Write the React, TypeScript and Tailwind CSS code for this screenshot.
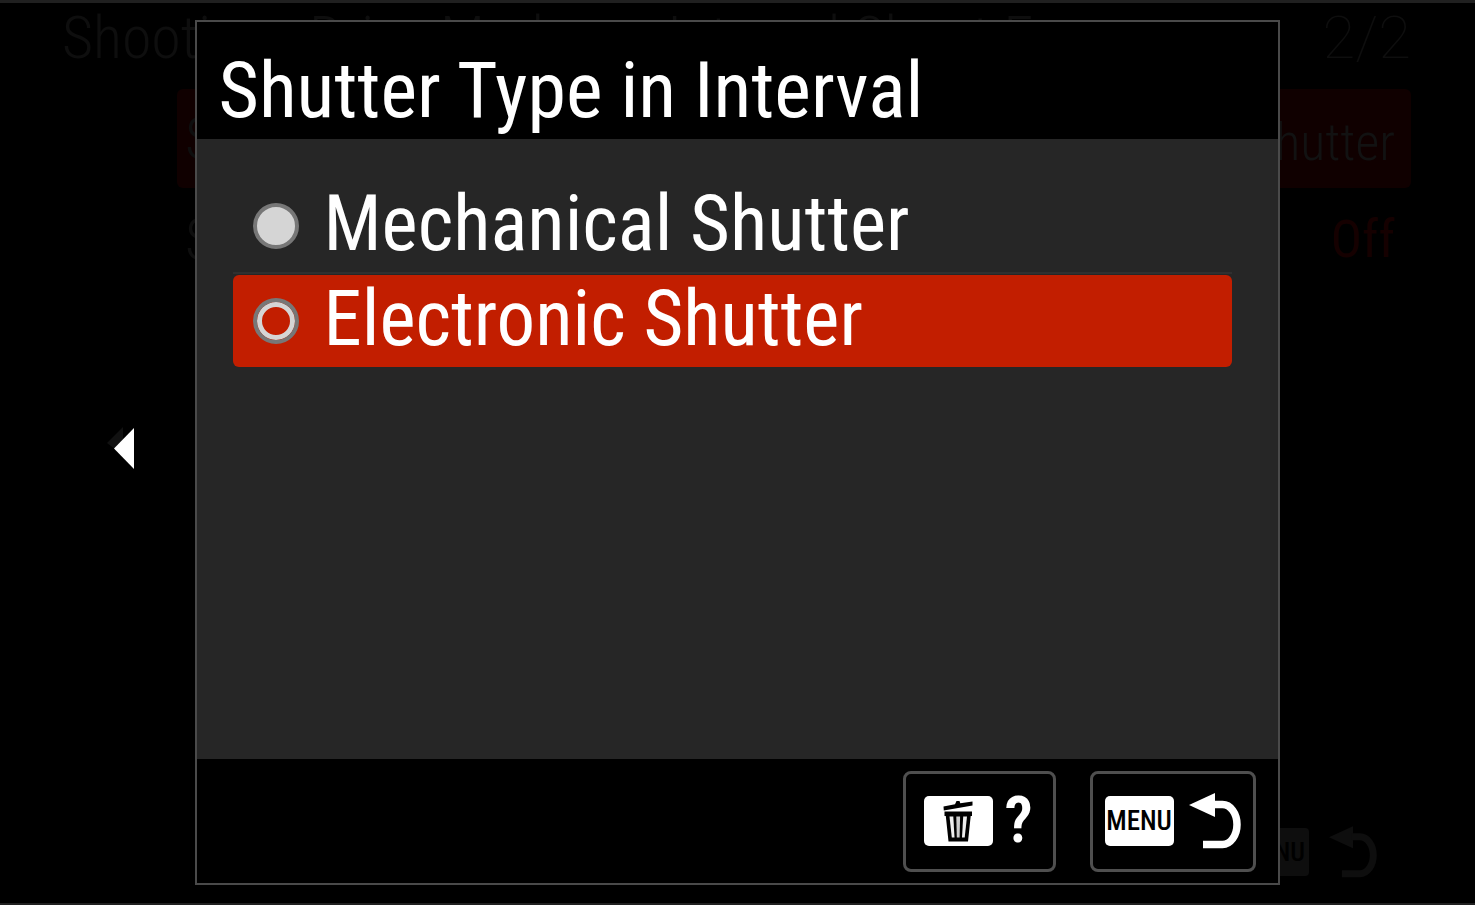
import { useState } from "react";

function ReturnIcon({ className }: { className: string }) {
  return (
    <svg viewBox="0 0 52 56" className={className} aria-hidden="true">
      <path d="M0 12 26 0v24z" fill="currentColor" />
      <path
        d="M24 11.500h9.500c8 0 14.500 9 14.500 20s-6.500 20-14.500 20H14"
        fill="none"
        stroke="currentColor"
        strokeWidth="7.500"
      />
    </svg>
  );
}

function TrashIcon() {
  return (
    <svg viewBox="0 0 30 42" className="h-[42px] w-[30px]" aria-hidden="true">
      <path d="M.500 6.500 12 4.300 13.500 1h3l.800 2.300L29.500 1.500v4L.800 10.500z" fill="#000" />
      <path d="M1.500 11.500h27.500v4.500h-1.300L25 41.500H5.500L2.800 16H1.500z" fill="#000" />
      <path d="M6.500 16.500h3.800l1.200 21H8.800z" fill="#eee" />
      <path d="M13.300 16.500h3.800l-.500 21h-2.800z" fill="#ccc" />
      <path d="M20.200 16.500H24l-2.300 21H19z" fill="#eee" />
    </svg>
  );
}

function Backdrop() {
  return (
    <div className="flex flex-1 flex-col text-[#0e0e0e]" aria-hidden="true">
      <div className="flex items-center justify-between pt-0.5 pr-16 pl-[62px] text-[60px] leading-[66px] font-light whitespace-nowrap">
        <div className="flex gap-10">
          <span>Shooting</span>
          <span className="pr-14">Drive Mode</span>
          <span>Interval Shoot F</span>
        </div>
        <span className="font-['Roboto'] font-thin">2/2</span>
      </div>
      <div className="mt-[18px] mr-16 ml-[177px] flex h-[99px] items-center justify-between rounded-md bg-[#100000] pr-4 pl-2 text-[52px]">
        <span className="text-[60px] font-light">Shutter Type</span>
        <span className="pt-2 font-light text-[#121212]">Electronic Shutter</span>
      </div>
      <div className="mr-16 ml-[177px] flex h-[99px] items-center justify-between pt-1 pr-4 pl-2 text-[60px] font-light">
        <span>Shoot Interval</span>
        <span className="text-[52px] font-normal text-[#150000]">Off</span>
      </div>
      <div className="mt-auto mr-[98px] mb-[25px] flex items-center justify-end gap-5">
        <span className="rounded bg-[#0e0e0e] px-1 text-[26px] leading-[48px] font-medium text-black">MENU</span>
        <ReturnIcon className="h-[52px] w-12" />
      </div>
    </div>
  );
}

const options = ["Mechanical Shutter", "Electronic Shutter"];

export default function App() {
  const [selected, setSelected] = useState(options[1]);

  return (
    <main className="relative flex min-h-screen flex-col overflow-hidden border-t-[3px] border-b-2 border-[#202020] bg-black font-['Roboto_Condensed','Roboto',sans-serif]">
      <Backdrop />

      <button
        type="button"
        aria-label="Previous page"
        className="absolute top-[49.5%] left-[107px] -translate-y-1/2 text-white"
      >
        <svg viewBox="0 0 27 44" className="h-11 w-[27px]">
          <path d="M16 0v28L0 16z" fill="#111" />
          <path d="M27 1v41L7 21.500z" fill="currentColor" />
        </svg>
      </button>

      <div className="absolute inset-0 flex justify-center pt-[17px] pb-[18px]">
        <section
          role="dialog"
          aria-labelledby="dialog-title"
          className="flex w-[73.5%] flex-col border-2 border-[#4a4a4a] bg-[#262626] text-white"
        >
          <h1 id="dialog-title" className="bg-black pt-5 pl-[21px] text-[78px] leading-[97px] whitespace-nowrap">
            Shutter Type in Interval
          </h1>

          <div role="radiogroup" aria-labelledby="dialog-title" className="flex-1 pt-[41px] pr-[46px] pl-9">
            {options.map((name, index) => {
              const active = name === selected;
              return (
                <div key={name} className={index > 0 ? "border-t-2 border-[#303030] pt-px" : ""}>
                  <label
                    className={`flex h-[92px] items-center gap-6 rounded-md pl-5 text-[77px] leading-none whitespace-nowrap ${
                      active ? "bg-[#c21e00]" : ""
                    }`}
                  >
                    <input
                      type="radio"
                      name="shutter"
                      checked={active}
                      onChange={() => setSelected(name)}
                      className={`size-[46px] shrink-0 appearance-none rounded-full border-4 border-[#777777] ${
                        active ? "bg-[#c21e00] shadow-[inset_0_0_0_5px_#d5d5d5]" : "bg-[#d5d5d5]"
                      }`}
                    />
                    <span className="pb-1">{name}</span>
                  </label>
                </div>
              );
            })}
          </div>

          <footer className="flex h-[124px] items-center justify-end gap-[34px] bg-black pr-[22px]">
            <button
              type="button"
              aria-label="Delete or help"
              className="flex h-[101px] w-[153px] items-center gap-3 rounded-lg border-[3px] border-[#4f4f4f] pl-[18px]"
            >
              <span className="flex h-[50px] w-[69px] items-center justify-center rounded-[5px] bg-white">
                <TrashIcon />
              </span>
              <span className="text-[64px] leading-none font-semibold">?</span>
            </button>
            <button
              type="button"
              aria-label="Menu back"
              className="flex h-[101px] w-[166px] items-center gap-[15px] rounded-lg border-[3px] border-[#4f4f4f] pl-3"
            >
              <span className="flex h-[50px] w-[69px] items-center justify-center rounded-[5px] bg-white text-[27px] leading-none font-medium text-black">
                MENU
              </span>
              <ReturnIcon className="h-14 w-[52px]" />
            </button>
          </footer>
        </section>
      </div>
    </main>
  );
}
